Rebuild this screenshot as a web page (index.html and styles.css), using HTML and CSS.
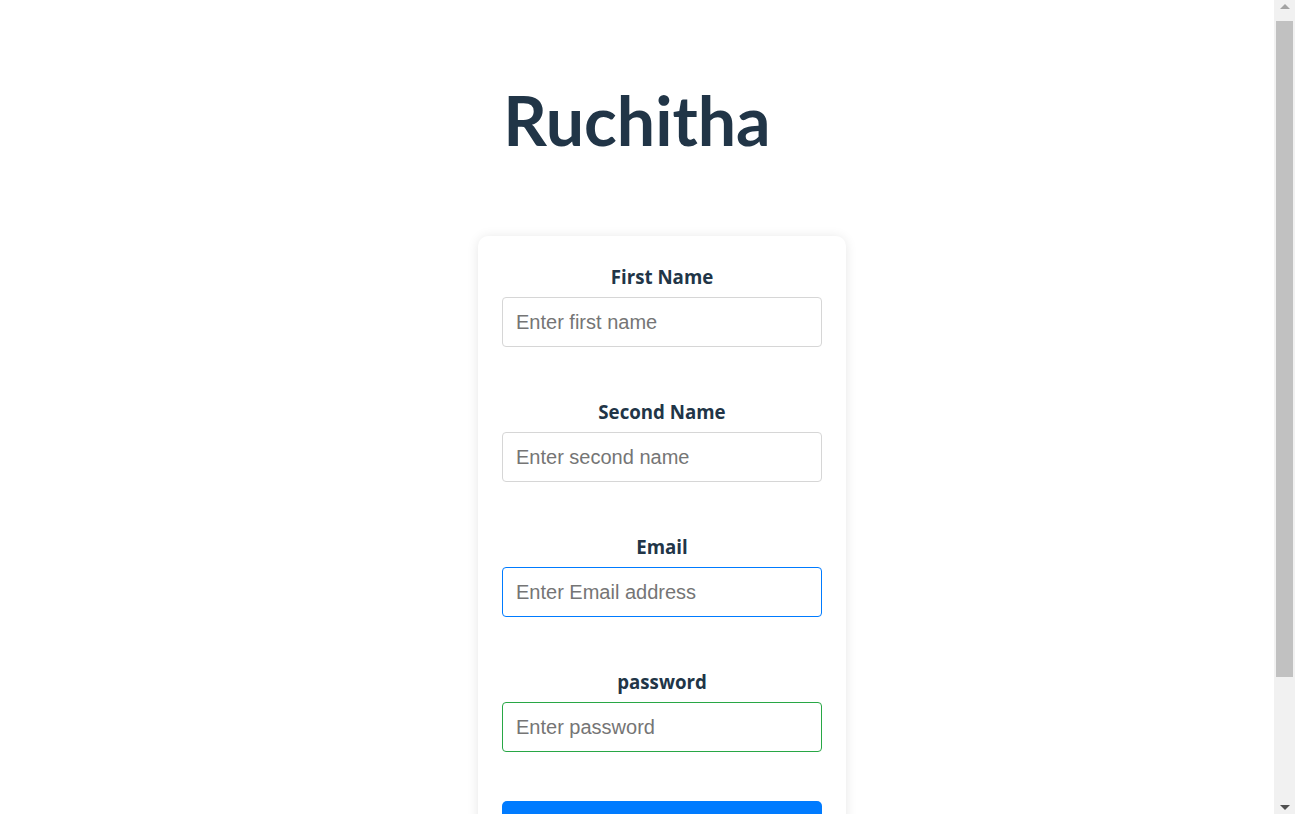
FILE: index.html
```html
<!DOCTYPE html>
<html lang="en">
<head>
<meta charset="utf-8">
<title>Ruchitha</title>
<link rel="stylesheet" href="styles.css">
</head>
<body>
<div class="page">
  <h1 class="title">Ruchitha</h1>
  <div class="card-wrap">
    <form class="card">
      <div class="group">
        <label class="label" for="fn">First Name</label>
        <input class="field" id="fn" type="text" placeholder="Enter first name">
      </div>
      <div class="group">
        <label class="label" for="sn">Second Name</label>
        <input class="field" id="sn" type="text" placeholder="Enter second name">
      </div>
      <div class="group">
        <label class="label" for="em">Email</label>
        <input class="field field-blue" id="em" type="email" placeholder="Enter Email address">
      </div>
      <div class="group">
        <label class="label" for="pw">password</label>
        <input class="field field-green" id="pw" type="password" placeholder="Enter password">
      </div>
      <button class="submit" type="button">Submit</button>
    </form>
  </div>
</div>
<div class="scrollbar" aria-hidden="true">
  <div class="sb-btn"><span class="arrow-up"></span></div>
  <div class="sb-thumb"></div>
  <div class="sb-track"></div>
  <div class="sb-btn"><span class="arrow-down"></span></div>
</div>
</body>
</html>
```

FILE: styles.css
```css
html, body {
  margin: 0;
  padding: 0;
  background: #ffffff;
}

body {
  font-family: "Open Sans", "Noto Sans", sans-serif;
  color: #213547;
  padding-right: 21px;
}

.page {
  display: flex;
  flex-direction: column;
  align-items: center;
  padding-top: 70px;
  padding-bottom: 92px;
}

.title {
  margin: 0;
  font-family: Lato, "Open Sans", sans-serif;
  font-size: 68px;
  line-height: 100px;
  font-weight: 700;
  color: #213547;
}

.card-wrap {
  align-self: stretch;
  display: flex;
  justify-content: center;
  padding-left: 50px;
  margin-top: 66px;
}

.card {
  width: 320px;
  padding: 28px 24px 24px;
  background: #fff;
  border-radius: 10px;
  box-shadow: 0 1px 12px rgba(0, 0, 0, 0.1);
  display: flex;
  flex-direction: column;
}

.group {
  display: flex;
  flex-direction: column;
  align-items: center;
  margin-bottom: 52px;
}

.group:nth-last-of-type(1) {
  margin-bottom: 49px;
}

.label {
  font-size: 18.7px;
  font-weight: 700;
  line-height: 26px;
  margin-bottom: 7px;
  color: #213547;
}

.field {
  box-sizing: border-box;
  width: 320px;
  height: 50px;
  padding: 0 13px;
  border: 1px solid #d6d6d6;
  border-radius: 4px;
  font-family: "Liberation Sans", Arial, sans-serif;
  font-size: 20px;
  color: #333;
  background: #fff;
  outline: none;
}

.field::placeholder {
  color: #757575;
}

.field-blue {
  border-color: #007bff;
}

.field-green {
  border-color: #28a745;
}

.submit {
  width: 320px;
  height: 50px;
  border: none;
  border-radius: 5px;
  background: #007bff;
  color: #fff;
  font-family: "Open Sans", sans-serif;
  font-size: 18px;
  font-weight: 700;
}

/* imitation of the browser's classic scrollbar */
.scrollbar {
  position: fixed;
  top: 0;
  right: 0;
  width: 21px;
  height: 100vh;
  background: #f1f1f1;
  display: flex;
  flex-direction: column;
}

.sb-btn {
  height: 21px;
  display: flex;
  align-items: center;
  justify-content: center;
  flex: none;
}

.sb-thumb {
  height: 656px;
  margin: 0 2px;
  background: #c1c1c1;
  flex: none;
}

.sb-track {
  flex: 1;
}

.arrow-up {
  width: 0;
  height: 0;
  border-left: 5px solid transparent;
  border-right: 5px solid transparent;
  border-bottom: 5px solid #a3a3a3;
  margin-top: -8px;
}

.arrow-down {
  width: 0;
  height: 0;
  border-left: 5px solid transparent;
  border-right: 5px solid transparent;
  border-top: 5px solid #505050;
  margin-top: 8px;
}
```
